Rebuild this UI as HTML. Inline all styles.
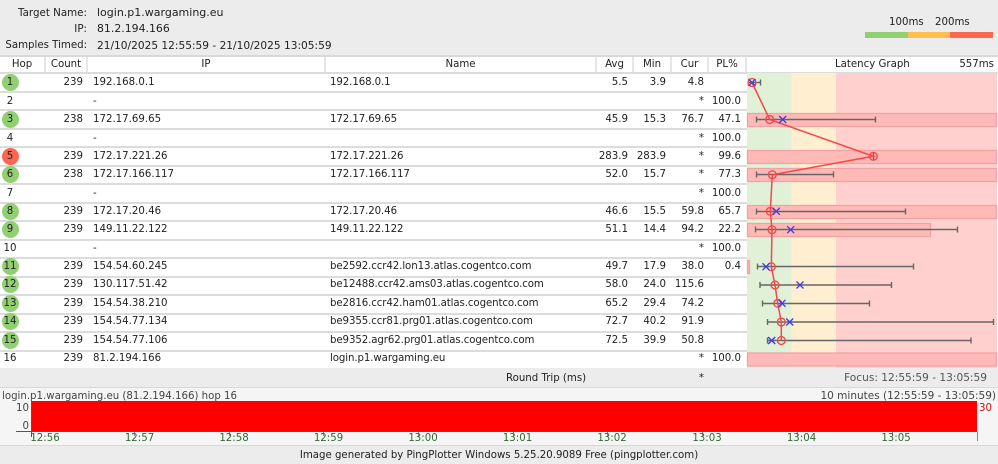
<!DOCTYPE html>
<html><head><meta charset="utf-8"><style>
html,body{margin:0;padding:0;background:#fff}
#p{position:relative;width:998px;height:464px;overflow:hidden;background:#fff;font:10.2px/14px "DejaVu Sans",sans-serif;color:#222;filter:blur(0.3px)}
#p div{position:absolute;white-space:nowrap}
.r{text-align:right}.c{text-align:center}
.h{top:57px;height:16px;line-height:16px;background:#fff;text-align:center;color:#222;border-right:2px solid #e6e6e6;box-sizing:border-box}
.l{left:0;width:747px;height:2px;background:#dcdcdc}
.d{width:17px;height:17px;border-radius:50%;left:2px;background:#92cf73}
.n,.a,.i,.m,.v,.w,.x,.y{line-height:16px}
.n{left:0;width:20px;text-align:center}
.a{left:40px;width:43px;text-align:right}
.i{left:93px}.m{left:330px;letter-spacing:-.09px}
.v{left:590px;width:38px;text-align:right}
.w{left:628px;width:38px;text-align:right}
.x{left:666px;width:38px;text-align:right}
.y{left:704px;width:37px;text-align:right}
.t{top:432px;width:60px;text-align:center;color:#2f6b2f}
</style></head><body><div id="p">
<div style="left:0;top:0;width:998px;height:55px;background:#ececec"></div>
<div class="r" style="left:0;top:6px;width:87px;font-size:10.3px">Target Name:</div><div style="left:97px;top:6px;font-size:11px">login.p1.wargaming.eu</div>
<div class="r" style="left:0;top:22px;width:87px;font-size:10.3px">IP:</div><div style="left:97px;top:22px;font-size:10.9px">81.2.194.166</div>
<div class="r" style="left:0;top:39px;width:87px;font-size:10.2px">Samples Timed:</div><div style="left:97px;top:39px;font-size:10.6px">21/10/2025 12:55:59 - 21/10/2025 13:05:59</div>
<div style="left:889px;top:16px">100ms</div><div style="left:935px;top:16px">200ms</div>
<div style="left:865px;top:32px;width:43px;height:6px;background:#92cf73"></div>
<div style="left:908px;top:32px;width:42px;height:6px;background:#ffbe4d"></div>
<div style="left:950px;top:32px;width:43px;height:6px;background:#ff6650"></div>
<div style="left:0;top:55px;width:998px;height:2px;background:#d8d8d8"></div>
<div class="h" style="left:0;width:46px">Hop</div>
<div class="h" style="left:46px;width:42px">Count</div>
<div class="h" style="left:88px;width:238px">IP</div>
<div class="h" style="left:326px;width:271px">Name</div>
<div class="h" style="left:597px;width:37px">Avg</div>
<div class="h" style="left:634px;width:38px">Min</div>
<div class="h" style="left:672px;width:37px">Cur</div>
<div class="h" style="left:709px;width:38px">PL%</div>
<div style="left:835px;top:58px">Latency Graph</div>
<div class="r" style="left:900px;top:58px;width:94px">557ms</div>
<div class="l" style="top:72px;width:998px"></div>
<div class="l" style="top:90.5px"></div><div class="l" style="top:109px"></div><div class="l" style="top:127.5px"></div><div class="l" style="top:146px"></div><div class="l" style="top:164.5px"></div><div class="l" style="top:183px"></div><div class="l" style="top:201.5px"></div><div class="l" style="top:220px"></div><div class="l" style="top:238.5px"></div><div class="l" style="top:257px"></div><div class="l" style="top:275.5px"></div><div class="l" style="top:294px"></div><div class="l" style="top:312.5px"></div><div class="l" style="top:331px"></div><div class="l" style="top:349.5px"></div>

<div class="d" style="top:74px"></div><div class="n" style="top:75px">1</div><div class="a" style="top:75px">239</div><div class="i" style="top:75px">192.168.0.1</div><div class="m" style="top:75px">192.168.0.1</div><div class="v" style="top:75px">5.5</div><div class="w" style="top:75px">3.9</div><div class="x" style="top:75px">4.8</div>
<div class="n" style="top:94px">2</div><div class="i" style="top:94px">-</div><div class="x" style="top:94px">*</div><div class="y" style="top:94px">100.0</div>
<div class="d" style="top:111px"></div><div class="n" style="top:112px">3</div><div class="a" style="top:112px">238</div><div class="i" style="top:112px">172.17.69.65</div><div class="m" style="top:112px">172.17.69.65</div><div class="v" style="top:112px">45.9</div><div class="w" style="top:112px">15.3</div><div class="x" style="top:112px">76.7</div><div class="y" style="top:112px">47.1</div>
<div class="n" style="top:131px">4</div><div class="i" style="top:131px">-</div><div class="x" style="top:131px">*</div><div class="y" style="top:131px">100.0</div>
<div class="d" style="top:148px;background:#ff6650"></div><div class="n" style="top:149px">5</div><div class="a" style="top:149px">239</div><div class="i" style="top:149px">172.17.221.26</div><div class="m" style="top:149px">172.17.221.26</div><div class="v" style="top:149px">283.9</div><div class="w" style="top:149px">283.9</div><div class="x" style="top:149px">*</div><div class="y" style="top:149px">99.6</div>
<div class="d" style="top:166px"></div><div class="n" style="top:167px">6</div><div class="a" style="top:167px">238</div><div class="i" style="top:167px">172.17.166.117</div><div class="m" style="top:167px">172.17.166.117</div><div class="v" style="top:167px">52.0</div><div class="w" style="top:167px">15.7</div><div class="x" style="top:167px">*</div><div class="y" style="top:167px">77.3</div>
<div class="n" style="top:186px">7</div><div class="i" style="top:186px">-</div><div class="x" style="top:186px">*</div><div class="y" style="top:186px">100.0</div>
<div class="d" style="top:203px"></div><div class="n" style="top:204px">8</div><div class="a" style="top:204px">239</div><div class="i" style="top:204px">172.17.20.46</div><div class="m" style="top:204px">172.17.20.46</div><div class="v" style="top:204px">46.6</div><div class="w" style="top:204px">15.5</div><div class="x" style="top:204px">59.8</div><div class="y" style="top:204px">65.7</div>
<div class="d" style="top:221px"></div><div class="n" style="top:222px">9</div><div class="a" style="top:222px">239</div><div class="i" style="top:222px">149.11.22.122</div><div class="m" style="top:222px">149.11.22.122</div><div class="v" style="top:222px">51.1</div><div class="w" style="top:222px">14.4</div><div class="x" style="top:222px">94.2</div><div class="y" style="top:222px">22.2</div>
<div class="n" style="top:241px">10</div><div class="i" style="top:241px">-</div><div class="x" style="top:241px">*</div><div class="y" style="top:241px">100.0</div>
<div class="d" style="top:258px"></div><div class="n" style="top:259px">11</div><div class="a" style="top:259px">239</div><div class="i" style="top:259px">154.54.60.245</div><div class="m" style="top:259px">be2592.ccr42.lon13.atlas.cogentco.com</div><div class="v" style="top:259px">49.7</div><div class="w" style="top:259px">17.9</div><div class="x" style="top:259px">38.0</div><div class="y" style="top:259px">0.4</div>
<div class="d" style="top:276px"></div><div class="n" style="top:277px">12</div><div class="a" style="top:277px">239</div><div class="i" style="top:277px">130.117.51.42</div><div class="m" style="top:277px">be12488.ccr42.ams03.atlas.cogentco.com</div><div class="v" style="top:277px">58.0</div><div class="w" style="top:277px">24.0</div><div class="x" style="top:277px">115.6</div>
<div class="d" style="top:295px"></div><div class="n" style="top:296px">13</div><div class="a" style="top:296px">239</div><div class="i" style="top:296px">154.54.38.210</div><div class="m" style="top:296px">be2816.ccr42.ham01.atlas.cogentco.com</div><div class="v" style="top:296px">65.2</div><div class="w" style="top:296px">29.4</div><div class="x" style="top:296px">74.2</div>
<div class="d" style="top:313px"></div><div class="n" style="top:314px">14</div><div class="a" style="top:314px">239</div><div class="i" style="top:314px">154.54.77.134</div><div class="m" style="top:314px">be9355.ccr81.prg01.atlas.cogentco.com</div><div class="v" style="top:314px">72.7</div><div class="w" style="top:314px">40.2</div><div class="x" style="top:314px">91.9</div>
<div class="d" style="top:332px"></div><div class="n" style="top:333px">15</div><div class="a" style="top:333px">239</div><div class="i" style="top:333px">154.54.77.106</div><div class="m" style="top:333px">be9352.agr62.prg01.atlas.cogentco.com</div><div class="v" style="top:333px">72.5</div><div class="w" style="top:333px">39.9</div><div class="x" style="top:333px">50.8</div>
<div class="n" style="top:351px">16</div><div class="a" style="top:351px">239</div><div class="i" style="top:351px">81.2.194.166</div><div class="m" style="top:351px">login.p1.wargaming.eu</div><div class="x" style="top:351px">*</div><div class="y" style="top:351px">100.0</div>

<svg style="position:absolute;left:0;top:0" width="998" height="464" viewBox="0 0 998 464">
<rect x="747" y="73" width="44.5" height="295" fill="#e0f1d7"/><rect x="791.5" y="73" width="44.5" height="295" fill="#ffeecf"/><rect x="836" y="73" width="161" height="295" fill="#ffd0cd"/>
<g fill="#ffb9b7" stroke="#f0a3a3" stroke-width="1.3">
<rect x="747.5" y="113.5" width="249" height="13"/><rect x="747.5" y="150.5" width="249" height="13"/><rect x="747.5" y="168.5" width="249" height="13"/><rect x="747.5" y="205.5" width="249" height="13"/><rect x="747.5" y="223.5" width="183" height="13"/><rect x="747.5" y="260.5" width="2" height="13"/><rect x="747.5" y="353" width="249" height="13"/>
</g>
<g stroke="#666" stroke-width="1.4" fill="none">
<path d="M749 82.500H760.500M760.500 79.500V85.500"/>
<path d="M756.500 119.500H875.500M756.500 116.500V122.500M875.500 116.500V122.500"/>
<path d="M873.500 153V160"/>
<path d="M756.500 174.500H833.500M756.500 171.500V177.500M833.500 171.500V177.500"/>
<path d="M756.500 211.500H905.500M756.500 208.500V214.500M905.500 208.500V214.500"/>
<path d="M755.500 229.500H957.500M755.500 226.500V232.500M957.500 226.500V232.500"/>
<path d="M757.500 266.500H913.500M757.500 263.500V269.500M913.500 263.500V269.500"/>
<path d="M760 285H891.500M760 282V288M891.500 282V288"/>
<path d="M762.500 303.500H869.500M762.500 300.500V306.500M869.500 300.500V306.500"/>
<path d="M767.500 322H993.500M767.500 319V325M993.500 319V325"/>
<path d="M767.500 340.500H971M767.500 337.500V343.500M971 337.500V343.500"/>
</g>
<path d="M752 82.500L769.700 119.500L873.300 156.300L772.300 174.700L770.300 211.300L772 229.700L771.300 266.700L775 285L777.700 303.300L781.300 322V340.500" fill="none" stroke="#f4484a" stroke-width="1.500"/>
<g fill="none" stroke="#f4484a" stroke-width="1.400">
<circle cx="752" cy="82.500" r="3.900"/><circle cx="769.700" cy="119.500" r="3.900"/><circle cx="873.300" cy="156.300" r="3.900"/><circle cx="772.300" cy="174.700" r="3.900"/><circle cx="770.300" cy="211.300" r="3.900"/><circle cx="772" cy="229.700" r="3.900"/><circle cx="771.300" cy="266.700" r="3.900"/><circle cx="775" cy="285" r="3.900"/><circle cx="777.700" cy="303.300" r="3.900"/><circle cx="781.300" cy="322" r="3.900"/><circle cx="781.300" cy="340.500" r="3.900"/>
</g>
<path d="M748.500 79L755.500 86M755.500 79L748.500 86M779.200 116L786.200 123M786.200 116L779.200 123M772.800 207.800L779.800 214.800M779.800 207.800L772.800 214.800M787.200 226.200L794.200 233.200M794.200 226.200L787.200 233.200M762.500 263.200L769.500 270.200M769.500 263.200L762.500 270.200M796.500 281.500L803.500 288.500M803.500 281.500L796.500 288.500M778.500 299.800L785.500 306.800M785.500 299.800L778.500 306.800M786.200 318.500L793.200 325.500M793.200 318.500L786.200 325.500M768.200 337L775.200 344M775.200 337L768.200 344" fill="none" stroke="#3a3aee" stroke-width="1.300"/>
</svg>

<div style="left:0;top:368px;width:998px;height:20px;background:#ececec"></div>
<div style="left:0;top:387px;width:998px;height:1px;background:#d8d8d8"></div>
<div style="left:506px;top:372px">Round Trip (ms)</div>
<div class="x" style="top:371px">*</div>
<div class="r" style="left:800px;top:371px;width:187px;color:#555;font-size:10.6px">Focus: 12:55:59 - 13:05:59</div>
<div style="left:0;top:388px;width:998px;height:57px;background:#f5f5f5"></div>
<div style="left:2px;top:390px;color:#444">login.p1.wargaming.eu (81.2.194.166) hop 16</div>
<div class="r" style="left:780px;top:389px;width:216px;color:#444;font-size:10.5px">10 minutes (12:55:59 - 13:05:59)</div>
<div style="left:31px;top:401px;width:946px;height:30px;background:#ff0000"></div>
<div style="left:16px;top:431px;width:961px;height:1px;background:#555"></div>
<div style="left:31px;top:401px;width:1px;height:36px;background:#555"></div>
<div class="r" style="left:0;top:402px;width:29px;color:#444">10</div>
<div class="r" style="left:0;top:420px;width:29px;color:#444">0</div>
<div style="left:979px;top:402px;color:#cc1111">30</div>
<div style="left:134px;top:432px;width:1px;height:4px;background:#888"></div><div style="left:229px;top:432px;width:1px;height:4px;background:#888"></div><div style="left:323px;top:432px;width:1px;height:4px;background:#888"></div><div style="left:418px;top:432px;width:1px;height:4px;background:#888"></div><div style="left:513px;top:432px;width:1px;height:4px;background:#888"></div><div style="left:607px;top:432px;width:1px;height:4px;background:#888"></div><div style="left:702px;top:432px;width:1px;height:4px;background:#888"></div><div style="left:797px;top:432px;width:1px;height:4px;background:#888"></div><div style="left:892px;top:432px;width:1px;height:4px;background:#888"></div><div style="left:977px;top:432px;width:1px;height:9px;background:#888"></div>
<div class="t" style="left:15px">12:56</div><div class="t" style="left:109.500px">12:57</div><div class="t" style="left:204px">12:58</div><div class="t" style="left:298.500px">12:59</div><div class="t" style="left:393px">13:00</div><div class="t" style="left:487.500px">13:01</div><div class="t" style="left:582px">13:02</div><div class="t" style="left:677px">13:03</div><div class="t" style="left:771.500px">13:04</div><div class="t" style="left:866px">13:05</div>
<div style="left:0;top:445px;width:998px;height:19px;background:#ececec;border-top:1px solid #d8d8d8;box-sizing:border-box"></div>
<div class="c" style="left:0;top:449px;width:998px">Image generated by PingPlotter Windows 5.25.20.9089 Free (pingplotter.com)</div>
</div></body></html>
